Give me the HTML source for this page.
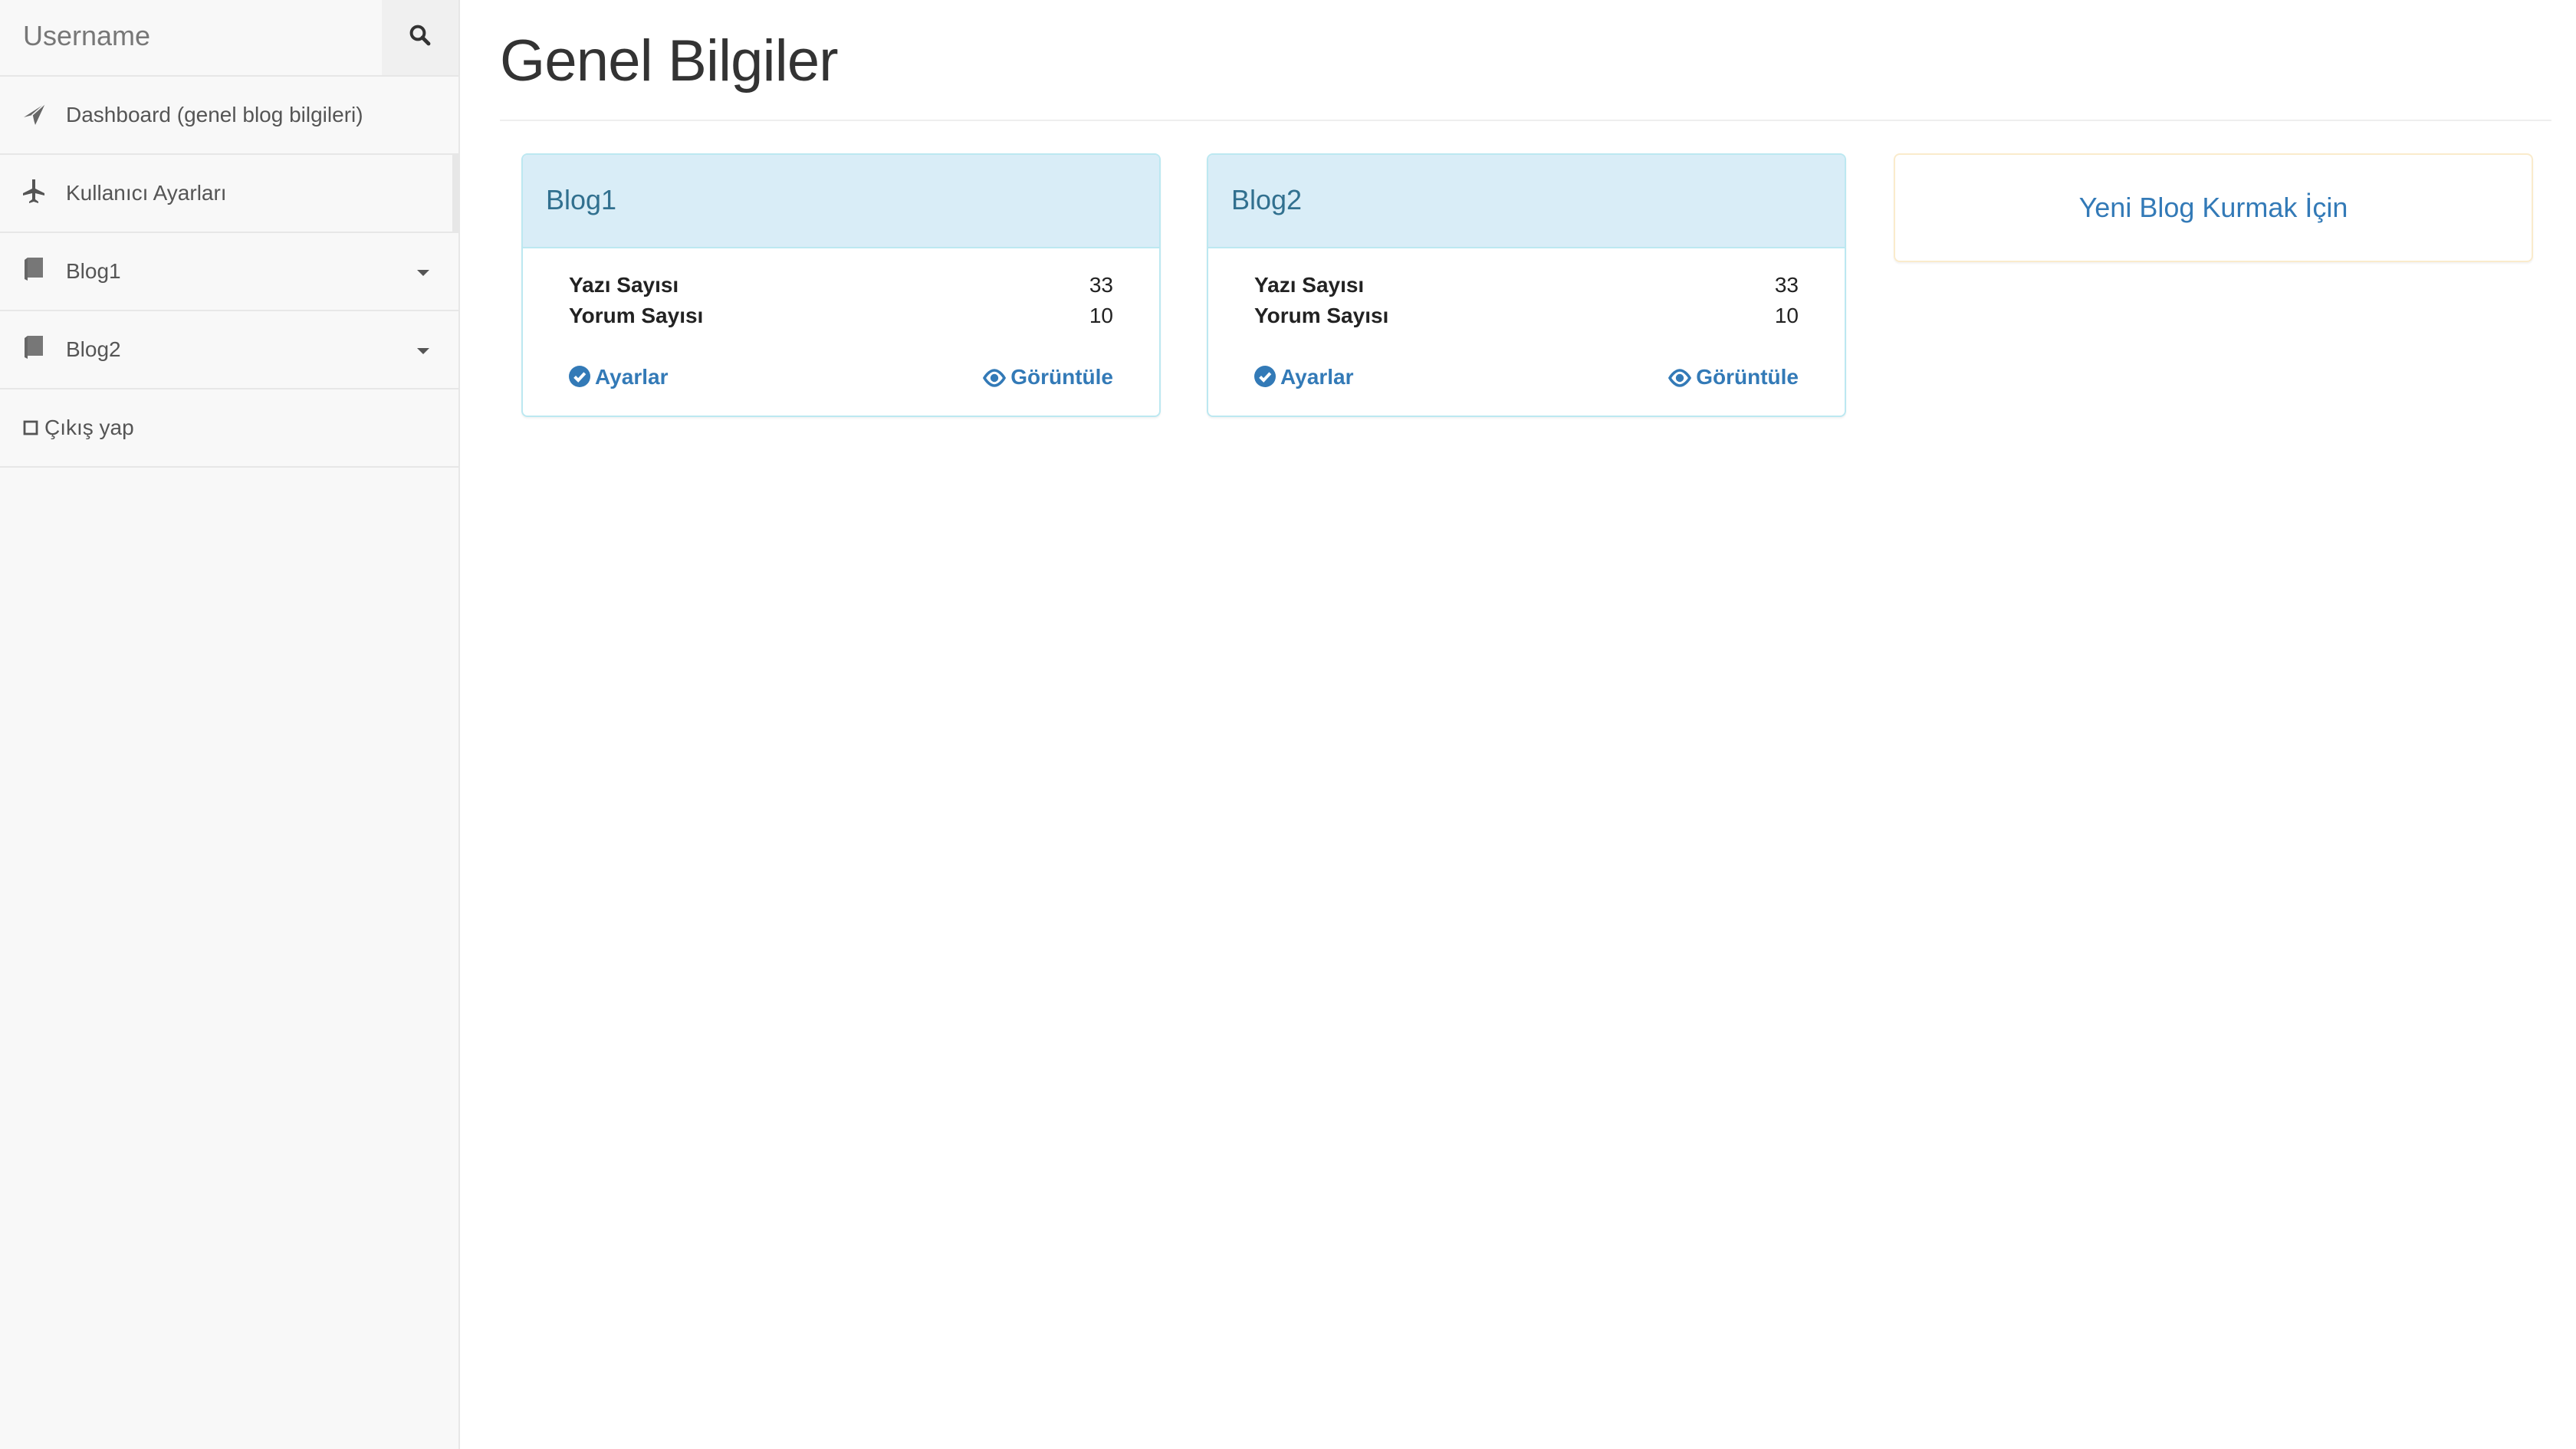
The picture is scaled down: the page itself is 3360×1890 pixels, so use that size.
<!DOCTYPE html>
<html><head><meta charset="utf-8"><style>
html{zoom:2}
*{box-sizing:border-box;margin:0;padding:0}
body{width:1680px;height:945px;background:#fff;font-family:"Liberation Sans",Arial,sans-serif;font-size:14px;color:#333;position:relative;overflow:hidden}
.side{position:absolute;left:0;top:0;width:300px;height:945px;background:#f8f8f8;border-right:1px solid #e7e7e7}
.search{height:50px;border-bottom:1px solid #e7e7e7;position:relative}
.search .ph{position:absolute;left:15px;top:13px;font-size:18px;color:#777}
.search .btn{position:absolute;right:0;top:0;width:50px;height:49px;background:#f0f0f0}
.item{height:51px;border-bottom:1px solid #e7e7e7;position:relative;color:#555}
.item .t{position:absolute;left:43px;top:17px}
.item svg{position:absolute}
.caret{position:absolute;left:272px;top:24px;width:0;height:0;border-left:4px solid transparent;border-right:4px solid transparent;border-top:4px solid #555}
h1{position:absolute;left:326px;top:18px;font-size:38px;font-weight:500;color:#333;letter-spacing:-.4px}
.hr{position:absolute;left:326px;top:78px;width:1338px;border-top:1px solid #eee}
.card{position:absolute;top:100px;width:417px;height:172px;border:1px solid #bce8f1;border-radius:4px;background:#fff;box-shadow:0 1px 1px rgba(0,0,0,.05)}
.card .hd{height:61px;background:#d9edf7;border-bottom:1px solid #bce8f1;border-radius:3px 3px 0 0;color:#31708f;font-size:18px;padding:19px 15px}
.row{position:absolute;left:30px;right:30px;font-weight:bold;font-size:14px;color:#222}
.row span{float:right;font-weight:normal}
.lnk{position:absolute;top:137px;font-weight:bold;color:#337ab7;font-size:14px}
.lnk svg{vertical-align:-2px;margin-right:3px}
.new{position:absolute;left:1235px;top:100px;width:417px;height:71px;border:1px solid #faebcc;border-radius:4px;box-shadow:0 1px 1px rgba(0,0,0,.05);text-align:center;color:#337ab7;font-size:18px;padding-top:24px}
</style></head><body>
<div class="side">
 <div class="search"><div class="ph">Username</div><div class="btn"><svg style="position:absolute;left:18px;top:16px" width="14" height="14" viewBox="0 0 14 14"><circle cx="5.5" cy="5.5" r="4.2" fill="none" stroke="#333" stroke-width="2"/><path d="M8.5 8.5l4 4" stroke="#333" stroke-width="2.4" stroke-linecap="round"/></svg></div></div>
 <div class="item"><svg style="left:15px;top:17px" width="15" height="15" viewBox="0 0 15 15"><path d="M14.5 0.5L0.5 9.5l5.5-1.5L8 14.5z" fill="#666"/><path d="M14.5 0.5L6 8l1 5" fill="none" stroke="#f8f8f8" stroke-width="0.8"/></svg><div class="t">Dashboard (genel blog bilgileri)</div></div>
 <div class="item" style="border-right:4px solid #e7e7e7"><svg style="left:15px;top:16px" width="14" height="16" viewBox="0 0 14 16"><path d="M6 0h2v6l6 3v1.5l-6-1.5v4l2 1.5v1l-3-1-3 1v-1l2-1.5v-4l-6 1.5V9l6-3z" fill="#555"/></svg><div class="t">Kullanıcı Ayarları</div></div>
 <div class="item"><svg style="left:16px;top:16px" width="12" height="15" viewBox="0 0 12 15"><path d="M2 0h10v13H2z" fill="#777"/><path d="M0 1.5 2 0v15L0 14z" fill="#666"/></svg><div class="t">Blog1</div><div class="caret"></div></div>
 <div class="item"><svg style="left:16px;top:16px" width="12" height="15" viewBox="0 0 12 15"><path d="M2 0h10v13H2z" fill="#777"/><path d="M0 1.5 2 0v15L0 14z" fill="#666"/></svg><div class="t">Blog2</div><div class="caret"></div></div>
 <div class="item"><svg style="left:15px;top:20px" width="10" height="10" viewBox="0 0 10 10"><rect x="1" y="1" width="8" height="8" fill="none" stroke="#555" stroke-width="1.4"/></svg><div class="t" style="left:29px">Çıkış yap</div></div>
</div>
<h1>Genel Bilgiler</h1>
<div class="hr"></div>
<div class="card" style="left:340px"><div class="hd">Blog1</div>
 <div class="row" style="top:77px">Yazı Sayısı<span>33</span></div>
 <div class="row" style="top:97px">Yorum Sayısı<span>10</span></div>
 <div class="lnk" style="left:30px"><svg width="14" height="14" viewBox="0 0 14 14"><circle cx="7" cy="7" r="7" fill="#337ab7"/><path d="M3.8 7.2l2.3 2.3 4.3-4.6" fill="none" stroke="#fff" stroke-width="2"/></svg>Ayarlar</div>
 <div class="lnk" style="right:30px"><svg width="15" height="12" viewBox="0 0 15 12"><path d="M7.5 1C3.8 1 1 6 1 6s2.8 5 6.5 5S14 6 14 6 11.2 1 7.5 1z" fill="none" stroke="#337ab7" stroke-width="1.8"/><circle cx="7.5" cy="6" r="2.6" fill="#337ab7"/></svg>Görüntüle</div>
</div>
<div class="card" style="left:787px"><div class="hd">Blog2</div>
 <div class="row" style="top:77px">Yazı Sayısı<span>33</span></div>
 <div class="row" style="top:97px">Yorum Sayısı<span>10</span></div>
 <div class="lnk" style="left:30px"><svg width="14" height="14" viewBox="0 0 14 14"><circle cx="7" cy="7" r="7" fill="#337ab7"/><path d="M3.8 7.2l2.3 2.3 4.3-4.6" fill="none" stroke="#fff" stroke-width="2"/></svg>Ayarlar</div>
 <div class="lnk" style="right:30px"><svg width="15" height="12" viewBox="0 0 15 12"><path d="M7.5 1C3.8 1 1 6 1 6s2.8 5 6.5 5S14 6 14 6 11.2 1 7.5 1z" fill="none" stroke="#337ab7" stroke-width="1.8"/><circle cx="7.5" cy="6" r="2.6" fill="#337ab7"/></svg>Görüntüle</div>
</div>
<div class="new">Yeni Blog Kurmak İçin</div>
</body></html>
